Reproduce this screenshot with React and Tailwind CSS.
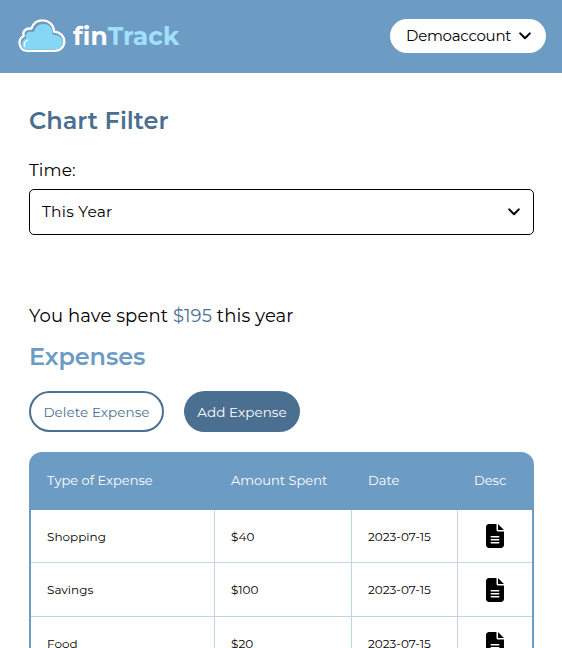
import React from "react";
import { FaFileLines } from "react-icons/fa6";

const expenses = [
  { type: "Shopping", amount: "$40", date: "2023-07-15" },
  { type: "Savings", amount: "$100", date: "2023-07-15" },
  { type: "Food", amount: "$20", date: "2023-07-15" },
];

function Chevron() {
  return (
    <svg className="h-[8px] w-[12px] shrink-0" viewBox="0 0 12 8" fill="none" stroke="#000" strokeWidth="2" strokeLinecap="round" strokeLinejoin="round">
      <path d="M1.2 1.4 6 6.2l4.8-4.8" />
    </svg>
  );
}

function Cloud() {
  return (
    <svg className="h-[34px] w-[48px] shrink-0" viewBox="0 0 48 34">
      <path d="M8.5 31.8C4.500 31.800 1.500 28.500 1.500 23.500c0-3 1.700-5.200 4.200-6.500C4.300 12.500 7.300 9.300 12 9.500h1.500C15 4.500 19.300 1.300 24.500 1.300c6 0 10.700 4 11.400 9.700l.1 1.700c6 .2 10.300 4.500 10.300 9.700 0 5.300-4.100 9.400-9.600 9.400z" fill="#7298ba" stroke="#fff" strokeWidth="2.300" strokeLinejoin="round" />
      <path d="M9 30.500c-3.200 0-5-2.500-5-5.500 0-2.800 1.700-4.900 4.300-5.800-1.700-4 .7-6.500 4.600-6.500h3.300c1-4.800 4.600-7.800 9.200-7.800 5.300 0 8.600 3.300 9 8.400l.1 2.500c6-.2 10.300 3 10.300 7.500 0 4.400-3.600 7.200-8.200 7.200z" fill="#84d8f6" />
      <path d="M6.500 27.500c-.6-3 .8-5.500 3.200-6.500" fill="none" stroke="#fff" strokeWidth="1.300" strokeLinecap="round" />
    </svg>
  );
}

export default function App() {
  return (
    <div className="h-[648px] w-full overflow-hidden bg-white font-['Montserrat','Inter',sans-serif] text-black">
      <header className="flex h-[73px] items-center justify-between bg-[#6c9bc4] pr-4 pb-[2px] pl-[18px]">
        <div className="flex items-center">
          <Cloud />
          <span className="ml-[7px] text-[25px] leading-8 font-bold tracking-[0.05px] whitespace-nowrap text-white">
            fin<span className="text-[#a0e0fc]">Track</span>
          </span>
        </div>
        <button className="flex h-[34px] w-[156px] items-center justify-between rounded-full bg-white pr-[15px] pl-4">
          <span className="text-[15px] leading-5 tracking-[-0.25px]">Demoaccount</span>
          <Chevron />
        </button>
      </header>

      <main className="flex flex-col pr-[28px] pl-[29px]">
        <h2 className="mt-8 text-[24px] leading-8 font-semibold tracking-[0.02px] text-[#4a6f91]">Chart Filter</h2>
        <label className="mt-[21px] text-[17px] leading-6 tracking-[0.1px]">Time:</label>
        <div className="mt-[7px] flex h-[46px] items-center justify-between rounded-[5px] border border-black pr-[13px] pl-3">
          <span className="text-[15.5px] leading-6 tracking-[0.22px]">This Year</span>
          <Chevron />
        </div>

        <p className="mt-[69px] text-[18px] leading-6 tracking-[0.12px]">
          You have spent <span className="text-[#4a6f91]">$195</span> this year
        </p>
        <h2 className="mt-[13px] text-[24px] leading-8 font-semibold tracking-[-0.1px] text-[#6c9bc4]">Expenses</h2>

        <div className="mt-[18px] flex gap-5">
          <button className="h-[41px] w-[135px] rounded-full border-2 border-[#4a6f91] pt-px text-[13.5px] tracking-[0.07px] whitespace-nowrap text-[#4a6f91]">Delete Expense</button>
          <button className="h-[41px] w-[116px] rounded-full bg-[#4a6f91] pt-px text-[13.5px] tracking-[0.07px] whitespace-nowrap text-white">Add Expense</button>
        </div>

        <div className="mt-5 overflow-hidden rounded-t-[13px] bg-[#6c9bc4] px-[2px]">
          <div className="grid h-[58px] grid-cols-[184px_137px_106px_74px] items-center text-[13px] whitespace-nowrap text-white">
            <span className="pl-4">Type of Expense</span>
            <span className="pl-4">Amount Spent</span>
            <span className="pl-4">Date</span>
            <span className="pl-4">Desc</span>
          </div>
          {expenses.map((e) => (
            <div key={e.type} className="grid h-[54px] grid-cols-[184px_137px_106px_74px] border-b border-[#c2d6e8] bg-white text-[12px] nth-2:h-[53px]">
              <span className="flex items-center border-r border-[#c2d6e8] pt-px pl-4">{e.type}</span>
              <span className="flex items-center border-r border-[#c2d6e8] pt-px pl-4">{e.amount}</span>
              <span className="flex items-center border-r border-[#c2d6e8] pt-px pl-4">{e.date}</span>
              <span className="flex items-center justify-center"><FaFileLines className="h-6 w-[18px]" /></span>
            </div>
          ))}
        </div>
      </main>
    </div>
  );
}
